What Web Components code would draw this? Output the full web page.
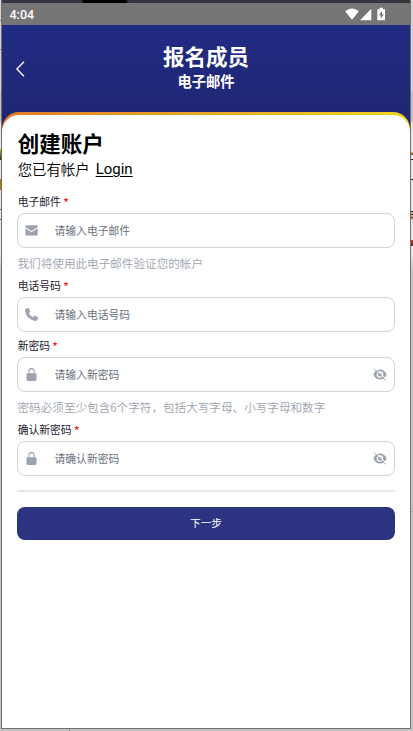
<!DOCTYPE html>
<html lang="zh-CN">
<head>
<meta charset="UTF-8">
<meta name="viewport" content="width=device-width, initial-scale=1.0">
<title>报名成员</title>
<style>
    html, body {
        margin: 0;
        height: 100%;
        overflow: hidden;
    }
    body {
        font-family: "Noto Sans CJK SC", "Noto Sans", sans-serif;
        color: #000;
    }
</style>
</head>
<body>
<device-frame>
    <status-bar time="4:04"></status-bar>
    <page-header heading="报名成员" sub="电子邮件"></page-header>
    <form-card>
        <span slot="title">创建账户</span>
        <span slot="lead">您已有帐户</span>
        <span slot="link">Login</span>
        <form-field label="电子邮件" hint-text="请输入电子邮件" icon="mail">我们将使用此电子邮件验证您的帐户</form-field>
        <form-field label="电话号码" hint-text="请输入电话号码" icon="phone"></form-field>
        <form-field label="新密码" hint-text="请输入新密码" icon="lock" secret>密码必须至少包含6个字符，包括大写字母、小写字母和数字</form-field>
        <form-field label="确认新密码" hint-text="请确认新密码" icon="lock" secret></form-field>
        <submit-button slot="action">下一步</submit-button>
    </form-card>
</device-frame>

<script>
const ICONS = {
    mail: '<svg width="13" height="11" viewBox="0 0 13 11"><path fill="#9ca3af" d="M1.6.2h9.8c.8 0 1.3.5 1.3 1.2v.6L6.5 5.9.3 2v-.6C.3.7.8.2 1.6.2zM.3 3.2l6.2 4 6.2-4v6.1c0 .8-.5 1.3-1.3 1.3H1.6c-.8 0-1.3-.5-1.3-1.3z"/></svg>',
    phone: '<svg width="13" height="13" viewBox="0 0 13 13"><path fill="#9ca3af" stroke="#9ca3af" stroke-width=".5" d="M.6 1.1 2.9.3c.4-.2.8 0 1 .4l1 2.5c.1.4 0 .7-.3.9L3.600 5.200c.9 1.700 2.300 3.200 4.400 4.200l1.100-1.200c.2-.3.6-.4.9-.2l2.300 1c.4.2.5.6.4 1l-.6 2c-.1.4-.4.6-.8.6C5.400 12.500.4 7.700.300 1.900c0-.4 0-.7.3-.8z"/></svg>',
    lock: '<svg width="13" height="13" viewBox="0 0 13 13"><rect x="1.500" y="5.300" width="10" height="7.600" rx="1.300" fill="#9ca3af"/><path d="M3.900 6V3.300a2.600 2.700 0 0 1 5.200 0V6" fill="none" stroke="#9ca3af" stroke-width="1.100"/></svg>',
    eye: '<svg width="14" height="13" viewBox="0 0 14 13"><path fill="#9ca3af" d="M7 1.400c3 0 5.200 1.700 6.600 5.100-1.400 3.400-3.600 5.100-6.600 5.100S1.800 9.900.4 6.500C1.800 3.100 4 1.400 7 1.400z"/><circle cx="7" cy="6.500" r="2.700" fill="none" stroke="#fff" stroke-width="1.200"/><path d="M1.900.2 13.500 11.500" stroke="#fff" stroke-width="1"/><path d="M1.200.800 12.800 12.300" stroke="#9ca3af" stroke-width="1"/></svg>'
};

// window border plus the strips of desktop showing around it
class DeviceFrame extends HTMLElement {
    constructor(){
        super();
        this.attachShadow({mode: 'open'})
        this.shadowRoot.innerHTML = `
            <style>
                :host {
                    display: block;
                    box-sizing: border-box;
                    height: 731px;
                    width: 413px;
                    padding: 0 2px 2px 1px;
                    background:
                        linear-gradient(#888, #888) 0 49px / 1px 1px no-repeat,
                        linear-gradient(#888, #888) 0 20px / 1px 1px no-repeat,
                        linear-gradient(#e8b030, #222) 0 149px / 1px 11px no-repeat,
                        linear-gradient(#b87800, #b87800) 0 179px / 1px 11px no-repeat,
                        linear-gradient(#666, #666) 0 209px / 1px 1px no-repeat,
                        linear-gradient(#666, #666) 0 219px / 1px 1px no-repeat,
                        linear-gradient(#e4b82c, #447) 411px 152px / 2px 3px no-repeat,
                        linear-gradient(#222, #222) 411px 159px / 2px 1px no-repeat,
                        linear-gradient(#222, #222) 411px 179px / 2px 1px no-repeat,
                        repeating-linear-gradient(#333 0 1px, #c9ae90 1px 3px) 411px 211px / 2px 9px no-repeat,
                        linear-gradient(#c83b22, #552222) 411px 240px / 2px 6px no-repeat,
                        linear-gradient(#aaa, #aaa) 411px 511px / 2px 1px no-repeat,
                        linear-gradient(#888, #888) 69px 729px / 1px 2px no-repeat,
                        linear-gradient(#d6d6d6, #d6d6d6 90px, #c2c2c2 91px, #c2c2c2 120px, #e8e8e8 124px, #e8e8e8 255px, #c4c4c4 270px);
                }
                .window {
                    display: flex;
                    flex-direction: column;
                    box-sizing: border-box;
                    height: 729px;
                    border: 1px solid #707070;
                    border-top: 0;
                    background: #fff;
                }
                .edge {
                    flex: none;
                    height: 3px;
                    background: linear-gradient(90deg, #34353d 79px, #000 82px 123px, #34353d 127px);
                }
            </style>
            <div class="window">
                <div class="edge"></div>
                <slot></slot>
            </div>
        `;
    }
}

class StatusBar extends HTMLElement {
    constructor(){
        super();
        this.attachShadow({mode: 'open'})
        this.shadowRoot.innerHTML = `
            <style>
                :host {
                    display: flex;
                    flex: none;
                    align-items: center;
                    justify-content: space-between;
                    box-sizing: border-box;
                    height: 22px;
                    padding: 1px 24.500px 0 7.500px;
                    background: #757575;
                    color: #fff;
                    font: 500 12.500px/22px Roboto, sans-serif;
                }
                svg { display: block; }
            </style>
            <span></span>
            <svg width="41" height="22" viewBox="0 0 41 22" fill="#fff">
                <path d="M.3 7.500C4.200 3.600 9.800 3.600 13.700 7.500L7 15.800z"/>
                <path d="M26.300 4.800v11.500H15z"/>
                <path d="M34.500 3.800h3.500v1.400h2v11.100h-7.700V5.200h2.200z"/>
                <path fill="#757575" d="M37 7l-3.100 4.300h1.900v3.500l3-4.500h-1.800z"/>
            </svg>
        `;
    }

    connectedCallback(){
        this.shadowRoot.querySelector('span').textContent = this.getAttribute('time');
    }
}

class PageHeader extends HTMLElement {
    constructor(){
        super();
        this.attachShadow({mode: 'open'})
        this.shadowRoot.innerHTML = `
            <style>
                :host {
                    display: grid;
                    flex: none;
                    grid-template-columns: 36px 1fr 36px;
                    align-items: center;
                    box-sizing: border-box;
                    height: 107px;
                    margin-bottom: -20px;
                    padding-bottom: 20px;
                    background: linear-gradient(#212b83, #1f2671);
                    color: #fff;
                    text-align: center;
                    font-weight: bold;
                }
                svg {
                    display: block;
                    margin-left: 13px;
                }
                .titles { padding-bottom: 4px; }
                h1 {
                    margin: 0;
                    font-size: 21.500px;
                    line-height: 28px;
                }
                h2 {
                    margin: 0;
                    font-size: 14.300px;
                    line-height: 22px;
                }
            </style>
            <svg width="11" height="18" viewBox="0 0 11 18"><path d="M9 1.800 1.900 9 9 16.200" fill="none" stroke="#fff" stroke-width="1.300"/></svg>
            <div class="titles"><h1></h1><h2></h2></div>
        `;
    }

    connectedCallback(){
        this.shadowRoot.querySelector('h1').textContent = this.getAttribute('heading');
        this.shadowRoot.querySelector('h2').textContent = this.getAttribute('sub');
    }
}

class FormCard extends HTMLElement {
    constructor(){
        super();
        this.attachShadow({mode: 'open'})
        this.shadowRoot.innerHTML = `
            <style>
                :host {
                    display: flex;
                    flex: 1;
                    padding-top: 3px;
                    border-radius: 17px 17px 0 0;
                    background: linear-gradient(90deg, #e17b2b, #f0d51f);
                }
                .sheet {
                    flex: 1;
                    padding: 14px 15px 0;
                    border-radius: 17px 17px 0 0;
                    background: #fff;
                }
                h3 {
                    margin: 0 0 0 .7px;
                    font-size: 21.500px;
                    line-height: 28px;
                }
                .account {
                    display: flex;
                    gap: 6px;
                    margin: 0 0 11px .7px;
                    font-size: 14.400px;
                    font-weight: 350;
                    line-height: 24px;
                }
                .login {
                    padding-top: 1px;
                    font-family: Roboto, sans-serif;
                    font-weight: 400;
                    font-size: 15px;
                    line-height: 23px;
                    text-decoration: underline;
                    text-underline-offset: 2px;
                }
                hr {
                    height: 2px;
                    margin: 10px 0 15px;
                    border: 0;
                    background: #e5e7eb;
                }
            </style>
            <div class="sheet">
                <h3><slot name="title"></slot></h3>
                <div class="account">
                    <slot name="lead"></slot>
                    <span class="login"><slot name="link"></slot></span>
                </div>
                <slot></slot>
                <hr>
                <slot name="action"></slot>
            </div>
        `;
    }
}

class FormField extends HTMLElement {
    constructor(){
        super();
        this.attachShadow({mode: 'open'})
        this.shadowRoot.innerHTML = `
            <style>
                :host {
                    display: block;
                    padding-bottom: 4px;
                }
                :host(:not(:empty)) { padding-bottom: 3px; }
                .label {
                    display: flex;
                    gap: 2px;
                    height: 20px;
                    margin: 0 0 1px .7px;
                    color: #1f2433;
                    font-size: 10.800px;
                    line-height: 19px;
                }
                .label b {
                    color: #ef2020;
                    font-weight: normal;
                    font-size: 13px;
                    line-height: 22px;
                }
                .box {
                    display: flex;
                    align-items: center;
                    box-sizing: border-box;
                    height: 35px;
                    padding: 0 7px;
                    border: 1px solid #d1d5db;
                    border-radius: 8px;
                    color: #6b7280;
                    font-size: 10.800px;
                }
                svg { display: block; }
                .text {
                    flex: 1;
                    margin-left: 16.500px;
                    padding-bottom: 2px;
                }
                .hint {
                    margin: 5px 0 0 .5px;
                    color: #9ca3af;
                    font-size: 11.600px;
                    font-weight: 350;
                    line-height: 20px;
                }
                :host(:empty) .hint { display: none; }
            </style>
            <div class="label"><span></span><b>*</b></div>
            <div class="box">
                <span class="icon"></span>
                <span class="text"></span>
                <span class="toggle"></span>
            </div>
            <div class="hint"><slot></slot></div>
        `;
    }

    connectedCallback(){
        this.shadowRoot.querySelector('.label span').textContent = this.getAttribute('label');
        this.shadowRoot.querySelector('.text').textContent = this.getAttribute('hint-text');
        this.shadowRoot.querySelector('.icon').innerHTML = ICONS[this.getAttribute('icon')];
        if(this.hasAttribute('secret')){
            this.shadowRoot.querySelector('.toggle').innerHTML = ICONS.eye;
        }
    }
}

class SubmitButton extends HTMLElement {
    constructor(){
        super();
        this.attachShadow({mode: 'open'})
        this.shadowRoot.innerHTML = `
            <style>
                :host { display: block; }
                button {
                    display: block;
                    width: 100%;
                    height: 32.500px;
                    padding: 0 0 2px;
                    border: 0;
                    border-radius: 8px;
                    background: #2c3482;
                    color: #fff;
                    font: inherit;
                    font-size: 10.700px;
                }
            </style>
            <button type="button"><slot></slot></button>
        `;
    }
}

customElements.define('device-frame',DeviceFrame)
customElements.define('status-bar',StatusBar)
customElements.define('page-header',PageHeader)
customElements.define('form-card',FormCard)
customElements.define('form-field',FormField)
customElements.define('submit-button',SubmitButton)
</script>
</body>
</html>
